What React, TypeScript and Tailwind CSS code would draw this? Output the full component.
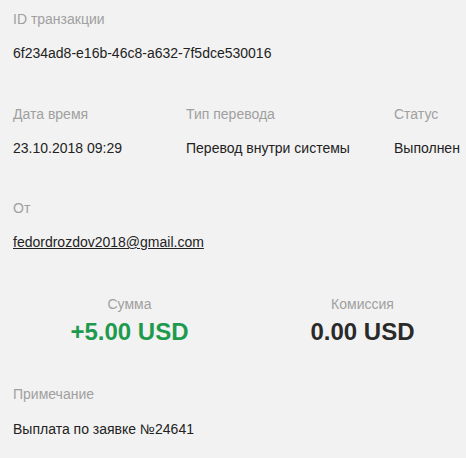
export default function App() {
  const font = { fontFamily: '"Liberation Sans", Arial, sans-serif' };
  return (
    <div className="w-[466px] h-[458px] overflow-hidden bg-[#f2f2f2] text-[14px] leading-[20px] text-[#222]" style={font}>
      <div className="pl-[13px] pt-[9px]">
        <div className="text-[#a0a0a0]">ID транзакции</div>
        <div className="mt-[14px]">6f234ad8-e16b-46c8-a632-7f5dce530016</div>

        <div className="mt-[41px] flex whitespace-nowrap">
          <div className="w-[173px] shrink-0">
            <div className="text-[#a0a0a0]">Дата время</div>
            <div className="mt-[14px]">23.10.2018 09:29</div>
          </div>
          <div className="w-[208px] shrink-0">
            <div className="text-[#a0a0a0]">Тип перевода</div>
            <div className="mt-[14px]">Перевод внутри системы</div>
          </div>
          <div className="shrink-0">
            <div className="text-[#a0a0a0]">Статус</div>
            <div className="mt-[14px]">Выполнен</div>
          </div>
        </div>

        <div className="mt-[40px] text-[#a0a0a0]">От</div>
        <div className="mt-[14px]">
          <a href="#" className="underline text-[#222]">fedordrozdov2018@gmail.com</a>
        </div>

        <div className="mt-[42px] flex">
          <div className="w-[233px] shrink-0 text-center">
            <div className="text-[#a0a0a0]">Сумма</div>
            <div className="mt-[4px] text-[24px] leading-[28px] font-bold text-[#1e9a4e]">+5.00 USD</div>
          </div>
          <div className="w-[233px] shrink-0 text-center">
            <div className="text-[#a0a0a0]">Комиссия</div>
            <div className="mt-[4px] text-[24px] leading-[28px] font-bold text-[#2a2a2a]">0.00 USD</div>
          </div>
        </div>

        <div className="mt-[38px] text-[#a0a0a0]">Примечание</div>
        <div className="mt-[15px]">Выплата по заявке №24641</div>
      </div>
    </div>
  );
}
